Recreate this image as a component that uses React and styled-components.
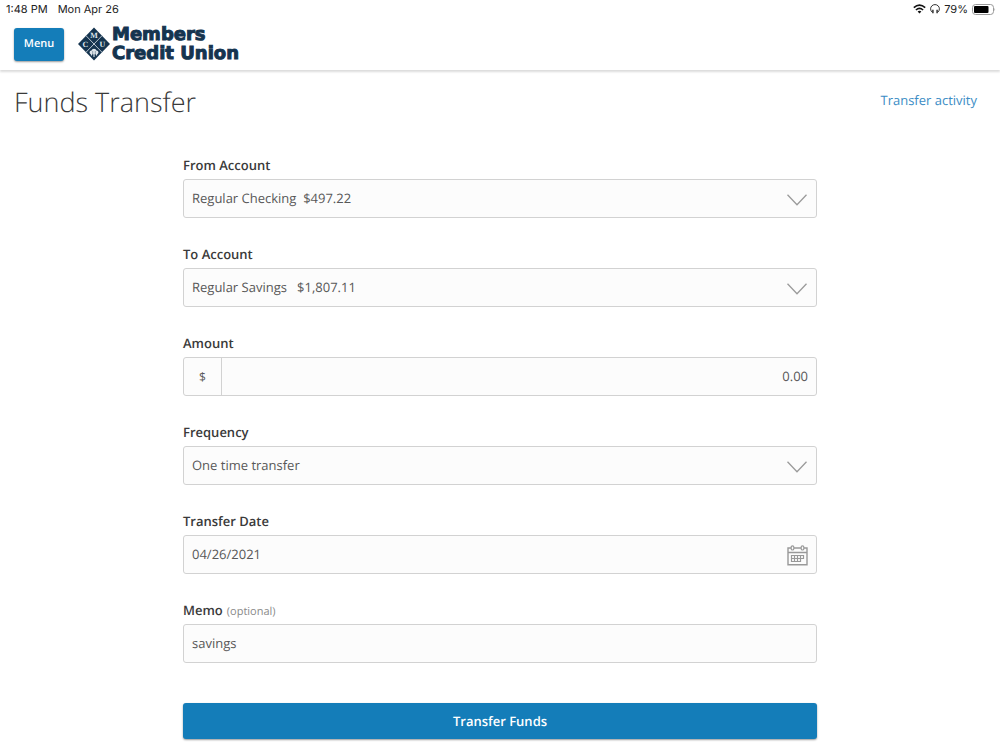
import React, { useState } from 'react';
import styled, { createGlobalStyle } from 'styled-components';

const GlobalStyle = createGlobalStyle`
  * {
    box-sizing: border-box;
  }

  body {
    margin: 0;
    background-color: #ffffff;
    color: #3a3a3a;
    font-family: 'Open Sans', Arial, sans-serif;
    font-size: 13px;
    text-rendering: geometricPrecision;
  }

  button,
  input,
  select {
    font-family: inherit;
    font-size: inherit;
    color: inherit;
    text-rendering: inherit;
  }
`;

const StatusBar = styled.div`
  display: flex;
  justify-content: space-between;
  align-items: center;
  height: 18px;
  padding: 0 4px 0 6px;
  font-family: Inter, Arial, sans-serif;
  font-size: 11px;
  color: #222222;
`;

const StatusGroup = styled.div`
  display: flex;
  align-items: center;
  gap: ${props => props.$gap};
`;

const Header = styled.header`
  display: flex;
  align-items: center;
  gap: 14px;
  height: 52px;
  padding: 0 14px;
  box-shadow: 0 2px 2px rgba(0, 0, 0, .14);
`;

const Button = styled.button`
  background-color: #147db9;
  color: #ffffff;
  font-weight: 600;
  border: none;
  border-radius: 3px;
  box-shadow: 0 1px 2px rgba(0, 0, 0, .4);

  &:hover {
    cursor: pointer;
    opacity: .9;
  }
`;

const MenuButton = styled(Button)`
  width: 50px;
  height: 33px;
  padding: 0;
  font-size: 11px;
  line-height: 14px;
`;

const SubmitButton = styled(Button)`
  width: 100%;
  height: 36px;
  margin-top: 14px;
`;

const Brand = styled.a`
  display: flex;
  align-items: center;
  gap: 2px;
  color: #15344f;
  text-decoration: none;
`;

const BrandName = styled.span`
  font-family: 'DejaVu Sans', Arial, sans-serif;
  font-size: 18px;
  font-weight: 700;
  line-height: 19px;
  -webkit-text-stroke: 1px #15344f;
`;

const BrandLine = styled.span`
  display: block;
`;

const TitleRow = styled.div`
  display: flex;
  justify-content: space-between;
  align-items: flex-start;
  padding: 14px 23px 0 14px;
`;

const Title = styled.h1`
  margin: 0;
  font-size: 27px;
  font-weight: 300;
  line-height: 36px;
`;

const ActivityLink = styled.a`
  padding-top: 6px;
  color: #3c8dc5;
  line-height: 20px;
  text-decoration: none;
`;

const Form = styled.form`
  display: flex;
  flex-direction: column;
  gap: 26px;
  width: 100%;
  max-width: 662px;
  margin: 0 auto;
  padding: 35px 14px 10px;
`;

const Label = styled.label`
  display: block;
  margin-bottom: 4px;
  font-weight: 600;
  line-height: 20px;
`;

const Optional = styled.span`
  margin-left: 4px;
  font-size: 11px;
  font-weight: 400;
  line-height: 1;
  color: #8a8a8a;
`;

const Box = styled.div`
  position: relative;
  display: flex;
  height: 39px;
  background-color: #fcfcfc;
  border: 1px solid #d2d2d2;
  border-radius: 3px;
`;

const Select = styled.select`
  appearance: none;
  width: 100%;
  padding: 0 40px 2px 8px;
  background: transparent;
  border: none;
  color: #585858;
`;

const Input = styled.input`
  flex: 1;
  min-width: 0;
  padding: 0 8px 2px;
  background: transparent;
  border: none;
  color: #585858;
  text-align: ${props => props.$align || 'left'};
`;

const Prefix = styled.span`
  display: flex;
  align-items: center;
  justify-content: center;
  width: 38px;
  border-right: 1px solid #d2d2d2;
  font-size: 12px;
  color: #585858;
`;

const Chevron = styled.svg`
  position: absolute;
  right: 9px;
  top: 14px;
  pointer-events: none;
`;

const CalendarButton = styled.button`
  display: flex;
  align-items: center;
  padding: 2px 8px 0;
  background: transparent;
  border: none;

  &:hover {
    cursor: pointer;
  }
`;

function Logo() {
  return (
    <svg width="32" height="34" viewBox="0 0 32 34" aria-hidden="true">
      <path d="M16 0.5L32 17L16 33.5L0 17Z" fill="#15344f" />
      <path d="M8 8.7L24 25.3M24 8.7L8 25.3" stroke="#c9d3dc" strokeWidth="0.9" />
      <g fill="#dfe6ec" fontFamily="'Liberation Serif', serif" fontWeight="700" fontSize="8" textAnchor="middle">
        <text x="16" y="10.5">M</text>
        <text x="7.5" y="19.5">C</text>
        <text x="24.5" y="19.5">U</text>
      </g>
      <path d="M11.5 25.8Q11.500 23.500 13.5 23.500Q14 21.800 16 21.800Q18 21.800 18.500 23.500Q20.500 23.500 20.500 25.800L19.500 27.200H12.500Z" fill="#dfe6ec" />
      <path d="M13.500 27V28.500M16 27V30M18.500 27V28.500" stroke="#dfe6ec" strokeWidth="1.1" />
      <path d="M14.700 24V27M17.300 24V27" stroke="#15344f" strokeWidth="0.4" />
    </svg>
  );
}

function WifiIcon() {
  return (
    <svg width="13" height="10" viewBox="0 0 13 10" fill="none" stroke="#111111" strokeWidth="1.6" aria-hidden="true">
      <path d="M0.8 3.7Q6.500 -1.500 12.2 3.7" />
      <path d="M2.9 6Q6.500 2.700 10.1 6" />
      <path d="M6.500 9.500L4.600 7.500Q6.500 6 8.400 7.500Z" fill="#111111" stroke="none" />
    </svg>
  );
}

function HeadphonesIcon() {
  return (
    <svg width="10" height="10" viewBox="0 0 10 10" fill="none" stroke="#333333" aria-hidden="true">
      <path d="M2.300 8.300Q0.600 7 0.600 4.800A4.400 4.200 0 0 1 9.400 4.800Q9.400 7 7.700 8.300" strokeWidth="1" />
      <path d="M2.900 5.800V9.200M7.100 5.800V9.200" strokeWidth="1.500" />
    </svg>
  );
}

function BatteryIcon() {
  return (
    <svg width="24" height="11" viewBox="0 0 24 11" aria-hidden="true">
      <rect x="0.500" y="0.500" width="21" height="10" rx="3" fill="none" stroke="#999999" />
      <rect x="2" y="2" width="14.500" height="7" rx="1" fill="#000000" />
      <path d="M22.500 3.700Q23.800 5.500 22.500 7.300Z" fill="#999999" />
    </svg>
  );
}

function CalendarIcon() {
  return (
    <svg width="21" height="21" viewBox="0 0 21 21" fill="none" stroke="#999999" strokeWidth="1.2" aria-hidden="true">
      <path d="M4 3H1V19.800H20V3H17M7 3H14M1 7.500H20" strokeWidth="1.400" />
      <rect x="4.200" y="0.800" width="2.600" height="4.200" rx="1.300" />
      <rect x="14.200" y="0.800" width="2.600" height="4.200" rx="1.300" />
      <path d="M4.500 10.500H16.500V13.500H4.500ZM4.500 13.500V16.500H13.500V10.500M7.500 10.500V16.500M10.500 10.500V16.500" />
    </svg>
  );
}

function SelectField({ id, label, options }) {
  return (
    <div>
      <Label htmlFor={id}>{label}</Label>
      <Box>
        <Select id={id}>
          {options.map((option) =>
            <option key={option}>{option}</option>
          )}
        </Select>
        <Chevron width="20" height="12" viewBox="0 0 20 12" fill="none" stroke="#9b9b9b" strokeWidth="1.3" aria-hidden="true">
          <path d="M0.500 0.800L10 10.700L19.500 0.800" />
        </Chevron>
      </Box>
    </div>
  );
}

function App() {
  const [amount, setAmount] = useState('0.00');
  const [date, setDate] = useState('04/26/2021');
  const [memo, setMemo] = useState('savings');

  return (
    <>
      <GlobalStyle />
      <StatusBar>
        <StatusGroup $gap="10px">
          <span>1:48 PM</span>
          <span>Mon Apr 26</span>
        </StatusGroup>
        <StatusGroup $gap="4px">
          <WifiIcon />
          <HeadphonesIcon />
          <span>79%</span>
          <BatteryIcon />
        </StatusGroup>
      </StatusBar>
      <Header>
        <MenuButton type="button">Menu</MenuButton>
        <Brand href="#home">
          <Logo />
          <BrandName>
            <BrandLine>Members</BrandLine>
            <BrandLine>Credit Union</BrandLine>
          </BrandName>
        </Brand>
      </Header>
      <main>
        <TitleRow>
          <Title>Funds Transfer</Title>
          <ActivityLink href="#activity">Transfer activity</ActivityLink>
        </TitleRow>
        <Form onSubmit={(e) => e.preventDefault()}>
          <SelectField id="from" label="From Account" options={['Regular Checking\u00a0 $497.22']} />
          <SelectField id="to" label="To Account" options={['Regular Savings\u00a0\u00a0 $1,807.11']} />
          <div>
            <Label htmlFor="amount">Amount</Label>
            <Box>
              <Prefix>$</Prefix>
              <Input id="amount" $align="right" value={amount} onChange={(e) => setAmount(e.target.value)} />
            </Box>
          </div>
          <SelectField id="frequency" label="Frequency" options={['One time transfer']} />
          <div>
            <Label htmlFor="date">Transfer Date</Label>
            <Box>
              <Input id="date" value={date} onChange={(e) => setDate(e.target.value)} />
              <CalendarButton type="button" aria-label="Choose date">
                <CalendarIcon />
              </CalendarButton>
            </Box>
          </div>
          <div>
            <Label htmlFor="memo">
              Memo
              <Optional>(optional)</Optional>
            </Label>
            <Box>
              <Input id="memo" value={memo} onChange={(e) => setMemo(e.target.value)} />
            </Box>
          </div>
          <SubmitButton type="submit">Transfer Funds</SubmitButton>
        </Form>
      </main>
    </>
  );
}

export default App;
